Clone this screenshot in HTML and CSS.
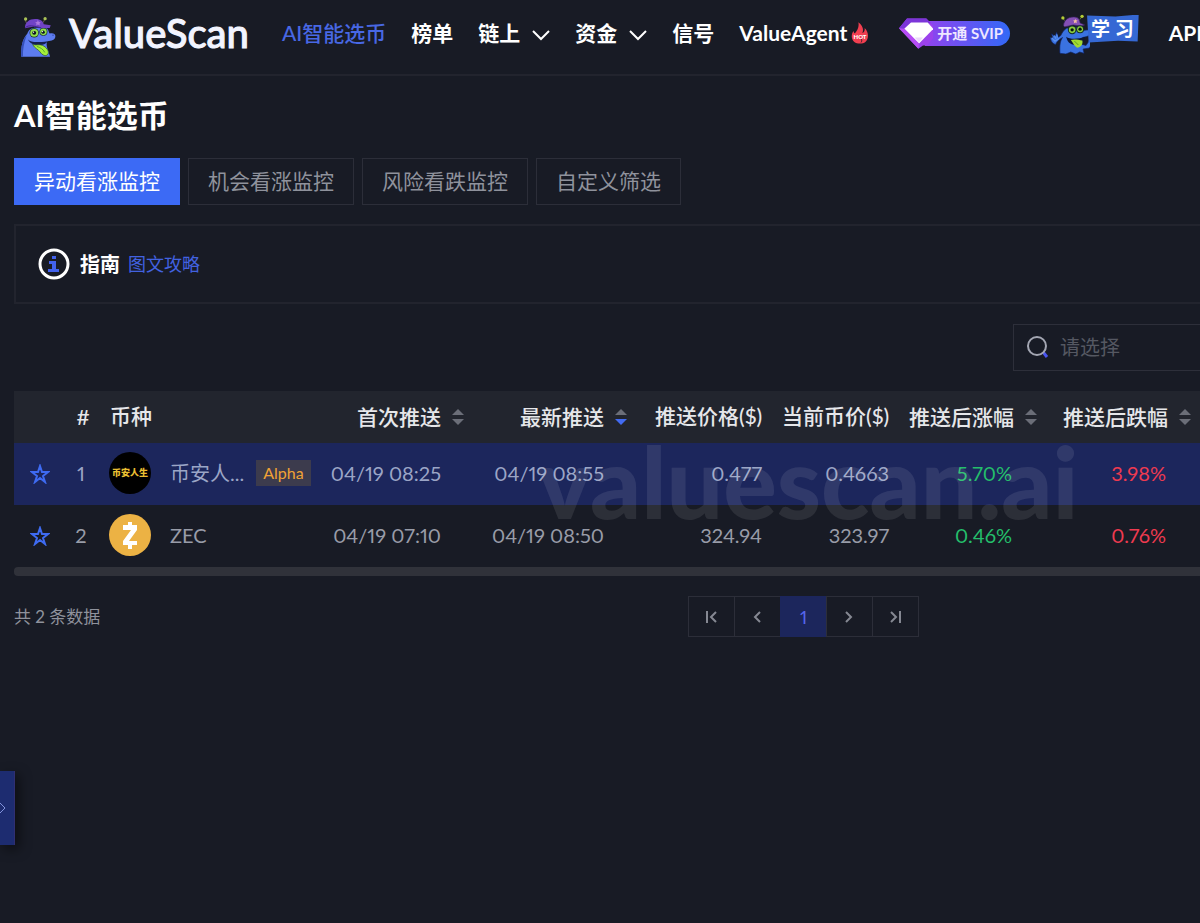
FILE: index.html
```html
<!DOCTYPE html>
<html lang="zh-CN">
<head>
<meta charset="utf-8">
<meta name="viewport" content="width=device-width, initial-scale=1">
<title>AI智能选币 - ValueScan</title>
<link rel="stylesheet" href="styles.css">
</head>
<body>
<header class="topbar">
  <a class="brand" href="#">
    <svg class="brand-mark" viewBox="55 45 115 130" aria-hidden="true">
      <path d="M62 171C60 140 66 118 80 102C84 88 96 82 112 84L140 86C146 92 144 98 148 101C160 99 166 103 165 111C164 120 154 124 141 124C134 136 144 150 149 171Z" fill="#5d7cf0"/>
      <path d="M62 171C60 140 66 118 78 106C70 130 66 150 67 171Z" fill="#3550b8"/>
      <path d="M74 61L78 70M133 58L128 68" stroke="#6a5a50" stroke-width="3"/>
      <circle cx="75" cy="57" r="5" fill="#a9c257"/><circle cx="134" cy="56" r="5" fill="#a9c257"/>
      <path d="M73 85C72 66 88 56 106 57C120 57 128 64 130 73L151 76L148 84L122 84L100 80Z" fill="#7043c6"/>
      <path d="M74 83C84 74 100 78 122 84" fill="none" stroke="#41238b" stroke-width="3"/>
      <path d="M112 60l3 6 6 1-4 4 1 6-6-3-5 3 1-6-4-4 6-1z" fill="#ab78dd"/>
      <circle cx="101" cy="99" r="14" fill="#17331f"/><circle cx="129" cy="96" r="12" fill="#17331f"/>
      <circle cx="101" cy="99" r="12" fill="#91dd4c"/><circle cx="129" cy="96" r="10" fill="#91dd4c"/>
      <circle cx="101" cy="99" r="6" fill="#0b1022"/><circle cx="128" cy="97" r="5" fill="#0b1022"/>
      <circle cx="99" cy="97" r="2" fill="#fff"/><circle cx="126" cy="95" r="2" fill="#fff"/>
      <path d="M82 119C92 129 112 128 142 124C138 131 130 135 118 136C102 137 88 131 82 119Z" fill="#15204f"/>
      <path d="M96 134C110 138 114 132 126 137C138 142 147 154 143 163C137 172 125 167 119 157C114 149 103 147 96 134Z" fill="#a6ef3b" stroke="#244d24" stroke-width="2"/>
      <path d="M109 140C119 143 128 148 133 158" fill="none" stroke="#58a62a" stroke-width="3"/>
      <circle cx="158" cy="106" r="2" fill="#2c3c9a"/>
    </svg>
    <span class="brand-name">ValueScan</span>
  </a>
  <nav class="nav" aria-label="主导航">
    <a class="nav-link nav-link-active" href="#">AI智能选币</a>
    <a class="nav-link" href="#">榜单</a>
    <a class="nav-link" href="#">链上
      <svg class="chevron" viewBox="0 0 18 18" aria-hidden="true"><path d="M1 5L9 13L17 5"/></svg></a>
    <a class="nav-link" href="#">资金
      <svg class="chevron" viewBox="0 0 18 18" aria-hidden="true"><path d="M1 5L9 13L17 5"/></svg></a>
    <a class="nav-link" href="#">信号</a>
    <a class="nav-link nav-agent" href="#">ValueAgent
      <svg class="flame" viewBox="0 0 54 66" aria-hidden="true">
        <path d="M22 1C35 10 39 23 34 33C40 31 42 24 41 18C54 32 54 49 43 60C36 66 18 66 10 60C-1 50 1 35 8 27C8 32 10 34 12 34C20 24 25 13 22 1Z" fill="#f13f50"/>
        <path d="M29 49C36 53 35 61 28 63C33 59 32 54 29 49Z" fill="#1a1c28"/>
        <text x="27" y="50" text-anchor="middle" class="flame-text">HOT</text>
      </svg></a>
  </nav>
  <a class="svip" href="#">
    <svg class="svip-gem" viewBox="0 0 102 92" aria-hidden="true">
      <path d="M24 1H82L102 22V60L84 82H72L58 92L0 30Z" fill="#9b42ec"/>
      <path d="M24 1H82L96 15H34L12 33L0 30Z" fill="#7c35d9"/>
      <path d="M36 13H86L103 32L60 76L16 32Z" fill="#fff"/>
      <path d="M16 32L60 76L58 92L0 30Z" fill="#b74df5"/>
      <path d="M47 58L60 72L72 58Z" fill="#ead8fa"/>
    </svg>
    <span class="svip-text">开通 SVIP</span>
  </a>
  <a class="learn" href="#">
    <svg class="learn-mascot" viewBox="52 42 124 124" aria-hidden="true">
      <path d="M85 164C84 140 85 128 93 116C82 122 74 130 72 137C60 134 59 125 55 116L64 120L60 105L70 113L75 100L80 115L87 111C92 103 95 94 105 88L145 84L154 96C168 91 178 93 178 101C178 109 170 113 154 116L151 137L164 140L173 127L184 130L174 148L155 151L158 164L145 160L133 166L118 160L103 166Z" fill="#3a72e0" stroke="#102566" stroke-width="2"/>
      <path d="M60 117L70 127L82 119M68 110L73 120M76 107L77 117" fill="none" stroke="#5b92ee" stroke-width="4"/>
      <path d="M94 58L99 65M151 54L145 62" stroke="#62723a" stroke-width="3"/>
      <circle cx="94" cy="57" r="5" fill="#b5ce35"/><circle cx="152" cy="52" r="5" fill="#b5ce35"/>
      <path d="M96 80C97 60 116 51 134 55C143 57 145 65 146 72L160 78L149 82L126 78L99 84Z" fill="#8450b4" stroke="#34215d" stroke-width="2"/>
      <path d="M132 60l2 4 5 1-4 3 1 5-4-2-5 2 1-5-3-3 5-1z" fill="#f0bda0"/>
      <circle cx="122" cy="93" r="13" fill="#142d28"/><circle cx="146" cy="91" r="12" fill="#142d28"/>
      <circle cx="122" cy="93" r="10" fill="#8acd3d"/><circle cx="146" cy="91" r="9" fill="#8acd3d"/>
      <circle cx="122" cy="93" r="5" fill="#07120e"/><circle cx="146" cy="91" r="5" fill="#07120e"/>
      <path d="M104 114C116 123 142 121 162 114C157 132 141 141 123 137C112 134 107 127 104 114Z" fill="#0d1735"/>
      <path d="M118 124C128 120 142 124 153 125C155 137 148 146 137 147C129 143 125 133 118 124Z" fill="#a2db32"/>
      <path d="M129 127L141 139" stroke="#609c27" stroke-width="3"/>
    </svg>
    <span class="learn-flag">学 习</span>
  </a>
  <a class="nav-link nav-api" href="#">API</a>
</header>

<main class="content">
  <h1 class="page-title">AI智能选币</h1>
  <div class="tabs">
    <button class="tab tab-active" type="button" aria-pressed="true">异动看涨监控</button>
    <button class="tab" type="button">机会看涨监控</button>
    <button class="tab" type="button">风险看跌监控</button>
    <button class="tab" type="button">自定义筛选</button>
  </div>

  <section class="guide">
    <svg class="guide-icon" viewBox="0 0 32 32" aria-hidden="true">
      <circle cx="16" cy="16" r="14" fill="none" stroke="#fff" stroke-width="3"/>
      <path d="M14 8H18V11H14ZM11 13H18V21H21V24H10V21H14V16H11Z" fill="#4262ee"/>
    </svg>
    <strong class="guide-label">指南</strong>
    <a class="guide-link" href="#">图文攻略</a>
  </section>

  <label class="search">
    <svg class="search-icon" viewBox="0 0 24 24" aria-hidden="true">
      <path d="M17 17L21 22" stroke="#4a55f0" stroke-width="3"/>
      <circle cx="11" cy="11" r="9" fill="none" stroke="#a3a6b2" stroke-width="2"/>
    </svg>
    <input class="search-input" type="text" placeholder="请选择" aria-label="请选择">
  </label>

  <section class="table-area">
    <div class="table-scroll">
      <table class="coins">
        <colgroup>
          <col class="col-star"><col class="col-index"><col class="col-coin"><col class="col-first"><col class="col-latest">
          <col class="col-price"><col class="col-price"><col class="col-change"><col class="col-change">
        </colgroup>
        <thead>
          <tr>
            <th></th>
            <th class="center">#</th>
            <th class="left">币种</th>
            <th><button class="sort" type="button">首次推送<svg class="sort-icon" viewBox="0 0 12 18" aria-hidden="true"><path class="up" d="M6 1L12 7H0z"/><path class="down" d="M0 11H12L6 17z"/></svg></button></th>
            <th><button class="sort sort-desc" type="button">最新推送<svg class="sort-icon" viewBox="0 0 12 18" aria-hidden="true"><path class="up" d="M6 1L12 7H0z"/><path class="down" d="M0 11H12L6 17z"/></svg></button></th>
            <th>推送价格($)</th>
            <th>当前币价($)</th>
            <th><button class="sort" type="button">推送后涨幅<svg class="sort-icon" viewBox="0 0 12 18" aria-hidden="true"><path class="up" d="M6 1L12 7H0z"/><path class="down" d="M0 11H12L6 17z"/></svg></button></th>
            <th><button class="sort" type="button">推送后跌幅<svg class="sort-icon" viewBox="0 0 12 18" aria-hidden="true"><path class="up" d="M6 1L12 7H0z"/><path class="down" d="M0 11H12L6 17z"/></svg></button></th>
          </tr>
        </thead>
        <tbody>
          <tr class="row-highlight">
            <td class="center"><button class="star" type="button" aria-label="收藏 币安人生"><svg viewBox="0 0 20 20"><path d="M10 2L12 8L18 8L13 12L15 18L10 14L5 18L7 12L2 8L8 8Z"/></svg></button></td>
            <td class="center index">1</td>
            <td class="left"><div class="coin">
              <span class="coin-logo coin-logo-bian">币安人生</span>
              <span class="coin-name">币安人...</span>
              <span class="badge">Alpha</span>
            </div></td>
            <td class="sorted">04/19 08:25</td>
            <td class="sorted">04/19 08:55</td>
            <td>0.477</td>
            <td>0.4663</td>
            <td class="sorted gain">5.70%</td>
            <td class="sorted loss">3.98%</td>
          </tr>
          <tr>
            <td class="center"><button class="star" type="button" aria-label="收藏 ZEC"><svg viewBox="0 0 20 20"><path d="M10 2L12 8L18 8L13 12L15 18L10 14L5 18L7 12L2 8L8 8Z"/></svg></button></td>
            <td class="center index">2</td>
            <td class="left"><div class="coin">
              <svg class="coin-logo" viewBox="0 0 42 42" aria-hidden="true">
                <circle cx="21" cy="21" r="21" fill="#ecb244"/>
                <path d="M14 11H19V8H23V11H28V16L20 27H28V31H23V35H19V31H14V27L22 16H14Z" fill="#fff"/>
              </svg>
              <span class="coin-name">ZEC</span>
            </div></td>
            <td class="sorted">04/19 07:10</td>
            <td class="sorted">04/19 08:50</td>
            <td>324.94</td>
            <td>323.97</td>
            <td class="sorted gain">0.46%</td>
            <td class="sorted loss">0.76%</td>
          </tr>
        </tbody>
      </table>
    </div>
    <div class="scrollbar"></div>
    <div class="watermark" aria-hidden="true">valuescan.ai</div>
  </section>

  <footer class="list-footer">
    <span class="total">共 2 条数据</span>
    <nav class="pager" aria-label="分页">
      <button class="page" type="button" aria-label="首页"><svg viewBox="0 0 16 16"><path d="M3 2V14M12 3L7 8L12 13"/></svg></button>
      <button class="page" type="button" aria-label="上一页"><svg viewBox="0 0 16 16"><path d="M10 3L5 8L10 13"/></svg></button>
      <button class="page page-current" type="button" aria-current="page">1</button>
      <button class="page" type="button" aria-label="下一页"><svg viewBox="0 0 16 16"><path d="M4 3L9 8L4 13"/></svg></button>
      <button class="page" type="button" aria-label="末页"><svg viewBox="0 0 16 16"><path d="M3 3L8 8L3 13M12 2V14"/></svg></button>
    </nav>
  </footer>
</main>

<button class="drawer" type="button" aria-label="展开侧栏"><svg viewBox="0 0 8 14"><path d="M0 2L5 7L0 12"/></svg></button>
</body>
</html>
```

FILE: styles.css
```css
* { box-sizing: border-box; }

body {
  margin: 0;
  min-height: 100vh;
  overflow-x: hidden;
  background: #181b25;
  color: #fff;
  font-family: Lato, "Noto Sans CJK SC", sans-serif;
  font-size: 20px;
  font-variant-numeric: proportional-nums;
  line-height: 28px;
}

a { color: inherit; text-decoration: none; }
button { margin: 0; padding: 0; border: 0; background: none; color: inherit; font: inherit; cursor: pointer; }
svg { display: block; flex: none; }

.topbar {
  display: flex;
  align-items: center;
  height: 76px;
  padding: 0 0 8px 19px;
  border-bottom: 2px solid #22242e;
  overflow: hidden;
  white-space: nowrap;
}
.brand { display: flex; align-items: center; gap: 12px; margin-right: 33px; }
.brand-mark { width: 38px; height: 43px; margin-top: 6px; }
.brand-name { font-size: 40px; line-height: 44px; color: #f2f4ff; font-weight: 500; -webkit-text-stroke: 1px #f2f4ff; }

.nav { display: flex; align-items: center; gap: 25px; margin-right: 30px; }
.nav-link { display: flex; align-items: center; gap: 12px; font-size: 21px; font-weight: 700; }
.nav-link-active { color: #4868e4; font-weight: 500; }
.nav-agent { gap: 4px; }
.chevron { width: 18px; height: 18px; margin-top: 3px; fill: none; stroke: #fff; stroke-width: 2; }
.flame { width: 18px; height: 22px; }
.flame-text { fill: #fff; font-size: 18px; font-weight: 900; }

.svip {
  display: flex;
  align-items: center;
  margin-right: 39px;
}
.svip-gem { z-index: 1; width: 34px; height: 31px; margin-right: -8px; }
.svip-text {
  padding: 0 7px 0 12px;
  border-radius: 0 13px 13px 0;
  background: linear-gradient(90deg, #9143ee, #3269f6);
  color: #eee6ff;
  font-size: 15px;
  font-weight: 700;
  line-height: 25px;
}

.learn { display: flex; align-items: flex-start; margin-right: 30px; }
.learn-mascot { width: 41px; height: 41px; }
.learn-flag {
  margin: 2px 0 0 -3px;
  padding: 0 5px 0 4px;
  background: #3568d4;
  clip-path: polygon(0 4%, 55% 7%, 100% 0, 98% 96%, 60% 94%, 3% 100%);
  font-size: 19px;
  font-weight: 700;
  line-height: 28px;
}

.content { padding: 20px 0 0 14px; }
.page-title { margin: 0 0 24px; font-size: 31px; line-height: 38px; font-weight: 700; }

.tabs { display: flex; gap: 8px; }
.tab { padding: 0 19px 2px; border: 1px solid #2c2e39; color: #8f929c; font-size: 21px; line-height: 43px; white-space: nowrap; }
.tab-active { border-color: #3c6af5; background: #3c6af5; color: #fff; }

.guide {
  display: flex;
  align-items: center;
  margin-top: 19px;
  padding: 22px;
  border: 2px solid #22242e;
  border-right: 0;
}
.guide-icon { width: 32px; height: 32px; }
.guide-label { margin: 0 8px 0 10px; }
.guide-link { color: #4262e0; font-size: 18px; }

.search {
  display: flex;
  align-items: center;
  gap: 10px;
  width: 187px;
  height: 47px;
  margin: 20px 0 20px auto;
  padding: 0 0 2px 12px;
  border: 1px solid #2d2f3a;
  border-right: 0;
}
.search-icon { width: 24px; height: 24px; }
.search-input { min-width: 0; flex: 1; padding: 0; border: 0; outline: 0; background: none; color: #fff; font: inherit; }
.search-input::placeholder { color: #555862; opacity: 1; }

.table-area { position: relative; }
.table-scroll { overflow: hidden; }
.coins { width: 100%; min-width: 1193px; border-collapse: collapse; table-layout: fixed; }
.col-star { width: 52px; }
.col-index { width: 34px; }
.col-coin { width: 222px; }
.col-first { width: 160px; }
.col-latest { width: 163px; }
.col-price { width: 127px; }
.col-change { width: 154px; }

.coins th { height: 52px; padding: 0 10px 2px; background: #22252e; color: #e6e7ea; font-size: 21px; font-weight: 500; text-align: right; white-space: nowrap; }
.coins td { height: 62px; padding: 0 10px 2px; color: #989ca8; text-align: right; white-space: nowrap; }
.coins .sorted { padding-right: 41px; padding-left: 0; }
.coins .left { text-align: left; }
.coins .center { padding: 0; text-align: center; }
.coins .index { padding: 0 4px 2px 0; }
.coins .gain { color: #24be6b; }
.coins .loss { color: #ee3a50; }
.coins .row-highlight td { background: #1c265c; }
.coins .row-highlight td:not(.gain, .loss) { color: #9ba5c6; }

.sort { display: inline-flex; align-items: center; gap: 11px; padding-right: 8px; vertical-align: middle; }
.sort-icon { width: 12px; height: 18px; fill: #6b6e78; }
.sort-desc .down { fill: #426bf2; }

.star { display: block; margin: 0 auto; }
.star svg { width: 20px; height: 20px; fill: none; stroke: #3e6bf2; stroke-width: 2; }

.coin { display: flex; align-items: center; }
.coin-logo { flex: none; width: 42px; height: 42px; margin: 0 19px 0 -1px; }
.coin-logo-bian { border-radius: 50%; background: #000; color: #e9bf32; font-size: 9px; font-weight: 900; line-height: 42px; text-align: center; }
.badge { margin-left: 12px; padding: 0 7px; background: #3c3b4d; color: #f0a235; font-size: 16px; line-height: 26px; }

.scrollbar { height: 9px; border-radius: 4px 0 0 4px; background: #30323a; }
.watermark {
  position: absolute;
  top: 39px;
  left: 524px;
  color: rgba(255, 255, 255, 0.09);
  font-size: 100px;
  font-weight: 900;
  line-height: 100px;
  pointer-events: none;
}

.list-footer { display: grid; grid-template-columns: 1fr auto 281px; align-items: center; margin-top: 20px; }
.total { color: #8f929c; font-size: 17px; }
.pager { display: flex; border-right: 1px solid #2c2e39; }
.page { display: grid; place-items: center; width: 46px; height: 41px; border: 1px solid #2c2e39; border-right: 0; color: #858892; font-size: 18px; }
.page svg { width: 16px; height: 16px; fill: none; stroke: currentColor; stroke-width: 2; }
.page-current { border-color: #1c265c; background: #1c265c; color: #5666ee; }

.drawer {
  position: fixed;
  top: 771px;
  left: 0;
  width: 15px;
  height: 74px;
  border-right: 1px solid #302f72;
  background: #1d2c70;
  box-shadow: 4px 4px 12px rgba(0, 0, 0, 0.5);
}
.drawer svg { width: 8px; height: 14px; fill: none; stroke: #8293dc; stroke-width: 1; }
```
